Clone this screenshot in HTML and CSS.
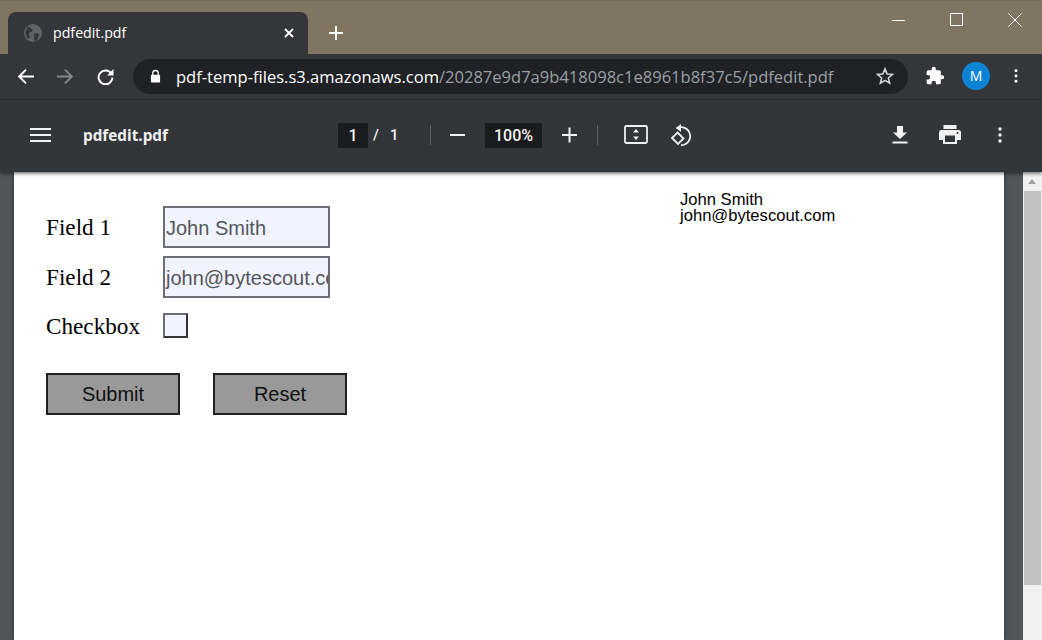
FILE: index.html
```html
<!DOCTYPE html>
<html lang="en">
<head>
<meta charset="utf-8">
<title>pdfedit.pdf</title>
<link rel="stylesheet" href="styles.css">
</head>
<body>
<div class="window">
  <header class="tabstrip">
    <div class="tab">
      <svg class="favicon" viewBox="0 0 16 16"><circle cx="8" cy="8" r="8" fill="#5f6368"/><path d="M3 2.500c2 .3 3.500 1 4.500 2.500.6 1-.5 1.800-1.500 2-1.200.2-2 1.200-1.500 2.500L5.500 12 3 13 1 8z" fill="#35363a"/><path d="M9.500 8.500c1.500-.5 3-.2 4 1L12 13.500l-2 2c-1-1.500-1.500-2.500-1-3.500.4-1.200-.5-3 .5-3.500z" fill="#35363a"/></svg>
      <span class="tab-title">pdfedit.pdf</span>
      <svg class="tab-close" viewBox="0 0 10 10"><path d="M1 1l8 8M9 1L1 9" stroke="#fff" stroke-width="1.800"/></svg>
    </div>
    <svg class="new-tab" viewBox="0 0 16 16"><path d="M8 1v14M1 8h14" stroke="#fff" stroke-width="2"/></svg>
    <div class="win-controls">
      <svg class="win-btn" viewBox="0 0 14 14"><path d="M0 7.500h13" stroke="#fff"/></svg>
      <svg class="win-btn" viewBox="0 0 14 14"><rect x=".5" y=".5" width="12" height="12" fill="none" stroke="#fff"/></svg>
      <svg class="win-btn" viewBox="0 0 14 14"><path d="M.5.500l13 13M13.500.500l-13 13" stroke="#fff"/></svg>
    </div>
  </header>

  <nav class="toolbar">
    <svg class="nav-icon" viewBox="0 0 16 16"><path d="M16 8H2M8.500 1.500L2 8l6.500 6.500" fill="none" stroke="#fff" stroke-width="1.800"/></svg>
    <svg class="nav-icon dim" viewBox="0 0 16 16"><path d="M0 8h14M7.500 1.500L14 8l-6.500 6.500" fill="none" stroke="#85878a" stroke-width="1.800"/></svg>
    <svg class="nav-icon" viewBox="0 0 16 16"><path d="M13.600 5.500A6.500 6.500 0 1 0 14.500 9" fill="none" stroke="#fff" stroke-width="1.800"/><path d="M15.500 1v6h-6z" fill="#fff"/></svg>
    <div class="omnibox">
      <svg class="lock" viewBox="0 0 12 14"><path d="M3 6V4a3 3 0 0 1 6 0v2" fill="none" stroke="#fff" stroke-width="1.400"/><rect x="1" y="5.500" width="10" height="8.500" rx="1" fill="#fff"/></svg>
      <span class="url"><span class="url-host">pdf-temp-files.s3.amazonaws.com</span>/20287e9d7a9b418098c1e8961b8f37c5/pdfedit.pdf</span>
      <svg class="star" viewBox="0 0 24 24"><path d="M12 3.500l2.500 6 6.500.5-5 4.300 1.500 6.300-5.500-3.400-5.500 3.400 1.500-6.300-5-4.300 6.500-.5z" fill="none" stroke="#d5d6d7" stroke-width="1.900"/></svg>
    </div>
    <svg class="puzzle" viewBox="0 0 24 24"><path d="M20.500 11H19V7a2 2 0 0 0-2-2h-4V3.500a2.500 2.500 0 0 0-5 0V5H4a2 2 0 0 0-2 2v3.800h1.500a2.700 2.700 0 0 1 0 5.400H2V20a2 2 0 0 0 2 2h3.800v-1.500a2.700 2.700 0 0 1 5.400 0V22H17a2 2 0 0 0 2-2v-4h1.500a2.500 2.500 0 0 0 0-5z" fill="#fff"/></svg>
    <div class="avatar">M</div>
    <svg class="dots" viewBox="0 0 4 16"><circle cx="2" cy="2" r="1.700" fill="#fff"/><circle cx="2" cy="8" r="1.700" fill="#fff"/><circle cx="2" cy="14" r="1.700" fill="#fff"/></svg>
  </nav>

  <section class="pdf-bar">
    <svg class="menu" viewBox="0 0 21 16"><path d="M0 2h21M0 8h21M0 14h21" stroke="#f1f1f1" stroke-width="2"/></svg>
    <span class="pdf-title">pdfedit.pdf</span>
    <div class="page-nav">
      <span class="num-box page-box">1</span>
      <span class="slash">/</span>
      <span class="page-total">1</span>
    </div>
    <span class="sep sep-a"></span>
    <svg class="zoom-icon" viewBox="0 0 16 16"><path d="M0 8h15" stroke="#f1f1f1" stroke-width="2"/></svg>
    <span class="num-box zoom-box">100%</span>
    <svg class="zoom-icon" viewBox="0 0 16 16"><path d="M0 8h15M7.500.500v15" stroke="#f1f1f1" stroke-width="2"/></svg>
    <span class="sep sep-b"></span>
    <svg class="fit" viewBox="0 0 24 20"><rect x="1" y="1" width="22" height="17" rx="1.500" fill="none" stroke="#f1f1f1" stroke-width="1.800"/><path d="M12 4l3 3.500H9zM12 15l-3-3.500h6z" fill="#f1f1f1"/></svg>
    <svg class="rotate" viewBox="0 0 24 24"><path d="M7.500 5.500A9 9 0 1 1 12 22.200" fill="none" stroke="#f1f1f1" stroke-width="1.800"/><path d="M12 1v8L7 5z" fill="#f1f1f1"/><path d="M8.500 9.500l6 6-5.500 5.500-6-6z" fill="none" stroke="#f1f1f1" stroke-width="1.800"/></svg>
    <div class="pdf-actions">
      <svg class="download" viewBox="0 0 16 18"><path d="M5 0h6v6.500h4L8 13 1 6.500h4zM.500 15.500h15v2H.500z" fill="#f1f1f1"/></svg>
      <svg class="print" viewBox="0 0 22 20"><path d="M4.500 0h13v4h-13zM2.500 5h17A2.500 2.500 0 0 1 22 7.500V15h-4v4H4v-4H0V7.500A2.500 2.500 0 0 1 2.500 5z" fill="#f1f1f1"/><rect x="6" y="10.500" width="10" height="6.500" fill="#323639"/><circle cx="18.500" cy="8" r="1" fill="#323639"/></svg>
      <svg class="dots pdf-dots" viewBox="0 0 4 16"><circle cx="2" cy="2" r="1.700" fill="#f1f1f1"/><circle cx="2" cy="8" r="1.700" fill="#f1f1f1"/><circle cx="2" cy="14" r="1.700" fill="#f1f1f1"/></svg>
    </div>
  </section>

  <main class="viewer">
    <div class="canvas">
      <article class="page">
        <form class="form">
          <div class="row row-field"><label class="label">Field 1</label><div class="input"><span class="value">John Smith</span></div></div>
          <div class="row row-field"><label class="label">Field 2</label><div class="input"><span class="value">john@bytescout.com</span></div></div>
          <div class="row row-check"><label class="label">Checkbox</label><div class="check"></div></div>
          <div class="buttons"><div class="btn">Submit</div><div class="btn">Reset</div></div>
        </form>
        <div class="output">John Smith<br>john@bytescout.com</div>
      </article>
    </div>
    <aside class="scrollbar">
      <div class="arrow"></div>
      <div class="thumb"></div>
    </aside>
  </main>
</div>
</body>
</html>
```
FILE: styles.css
```css
* { box-sizing: border-box; }
html, body { margin: 0; height: 100%; overflow: hidden; }
body { font-family: "Open Sans", sans-serif; }
svg { display: block; flex: none; }

.window { width: 1042px; height: 640px; display: flex; flex-direction: column; }

.tabstrip { height: 54px; flex: none; background: #7f7560; border-top: 1px solid #756b58; display: flex; align-items: flex-end; padding-left: 8px; }
.tab { width: 300px; height: 42px; background: #35363a; border-radius: 8px 8px 0 0; display: flex; align-items: center; padding: 0 16px; }
.favicon { width: 18px; height: 18px; }
.tab-title { margin: 0 0 2px 11px; color: #fff; font-size: 14.200px; font-family: "Open Sans", sans-serif; }
.tab-close { width: 10px; height: 10px; margin-left: auto; margin-right: -2px; }
.new-tab { width: 16px; height: 16px; margin: 0 0 13px 20px; }
.win-controls { margin-left: auto; align-self: flex-start; display: flex; gap: 44px; padding: 12px 20px 0 0; }
.win-btn { width: 14px; height: 14px; }

.toolbar { height: 46px; flex: none; background: #35363a; display: flex; align-items: center; padding: 0 0 1px 17px; border-bottom: 1px solid #2b2c2f; }
.nav-icon { width: 17px; height: 17px; margin-right: 23px; }
.nav-icon:nth-of-type(3) { margin-right: 19px; }
.omnibox { width: 775px; height: 35px; background: #202124; border-radius: 18px; display: flex; align-items: center; padding: 0 13px 0 17px; }
.lock { width: 11px; height: 14px; }
.url { margin-left: 15px; font-size: 16.550px; color: #9aa0a6; font-family: "Open Sans", sans-serif; white-space: nowrap; }
.url-host { color: #fff; }
.star { width: 20px; height: 20px; margin-left: auto; }
.puzzle { width: 20px; height: 20px; margin-left: 17px; }
.avatar { width: 28px; height: 28px; border-radius: 50%; background: #0b84d6; color: #fff; font-size: 14px; text-align: center; line-height: 28px; margin-left: 17px; }
.dots { width: 4px; height: 14px; margin-left: 24px; }

.pdf-bar { height: 72px; flex: none; background: #323639; color: #f1f1f1; display: flex; align-items: center; padding-left: 30px; box-shadow: 0 2px 3px rgba(0,0,0,.45); position: relative; z-index: 1; padding-bottom: 2px; }
.menu { width: 21px; height: 16px; }
.pdf-title { font: 700 15.300px "Open Sans", sans-serif; margin-left: 32px; width: 255px; }
.page-nav { display: flex; align-items: center; font: 500 15px Roboto, sans-serif; }
.num-box { background: #191b1c; height: 25px; text-align: center; font: 500 16px/25px Roboto, sans-serif; color: #f1f1f1; }
.page-box { width: 30px; }
.slash { margin-left: 5px; width: 11px; }
.page-total { margin-left: 6px; width: 7px; }
.sep { width: 1px; height: 20px; background: #5e6265; }
.sep-a { margin-left: 33px; }
.zoom-icon { width: 16px; height: 16px; margin-left: 19px; }
.zoom-box { width: 57px; margin-left: 19px; }
.zoom-box + .zoom-icon { margin-left: 20px; }
.sep-b { margin-left: 19px; }
.fit { width: 24px; height: 20px; margin-left: 26px; }
.rotate { width: 24px; height: 24px; margin-left: 21px; }
.pdf-actions { margin-left: auto; display: flex; align-items: center; }
.download { width: 16px; height: 18px; }
.print { width: 22px; height: 20px; margin-left: 31px; }
.pdf-dots { height: 16px; margin-left: 37px; margin-right: 40px; }

.viewer { flex: 1; min-height: 0; display: flex; background: #525659; }
.canvas { flex: 1; padding-left: 14px; min-width: 0; }
.page { width: 990px; height: 100%; background: #fff; border-top: 1px solid #f0f0f0; display: flex; position: relative; padding: 33px 0 0 32px; box-shadow: 0 0 5px rgba(0,0,0,.45); }
.form { width: 634px; flex: none; font-family: "Liberation Serif", serif; }
.row { display: flex; align-items: center; }
.row-field { height: 42px; margin-bottom: 8px; }
.row-check { height: 25px; margin-top: 15px; }
.label { width: 117px; font-size: 23.200px; color: #000; line-height: 30px; }
.input { width: 167px; height: 42px; background: #f1f4ff; border: 2px solid #6c6d75; font: 20px/24px "Liberation Sans", sans-serif; color: #55565a; overflow: hidden; white-space: nowrap; padding: 8px 0 0 1px; }
.check { width: 25px; height: 25px; background: #f1f4ff; border: 2px solid; border-color: #6c6d75 #333 #333 #6c6d75; }
.buttons { display: flex; gap: 33px; margin-top: 35px; }
.btn { width: 134px; height: 42px; background: #999; border: 2px solid #222; font: 20px/38px "Liberation Sans", sans-serif; color: #111; text-align: center; }
.output { font: 16.600px/16px "Liberation Sans", sans-serif; color: #000; margin-top: -14px; height: 32px; }

.scrollbar { width: 19px; flex: none; background: #f1f1f1; display: flex; flex-direction: column; }
.arrow { height: 19px; flex: none; position: relative; }
.arrow::before { content: ""; position: absolute; left: 5px; top: 7px; border: 4.500px solid transparent; border-top: 0; border-bottom: 5px solid #a3a3a3; }
.thumb { height: 394px; margin: 0 1px; background: #c1c1c1; }
```
